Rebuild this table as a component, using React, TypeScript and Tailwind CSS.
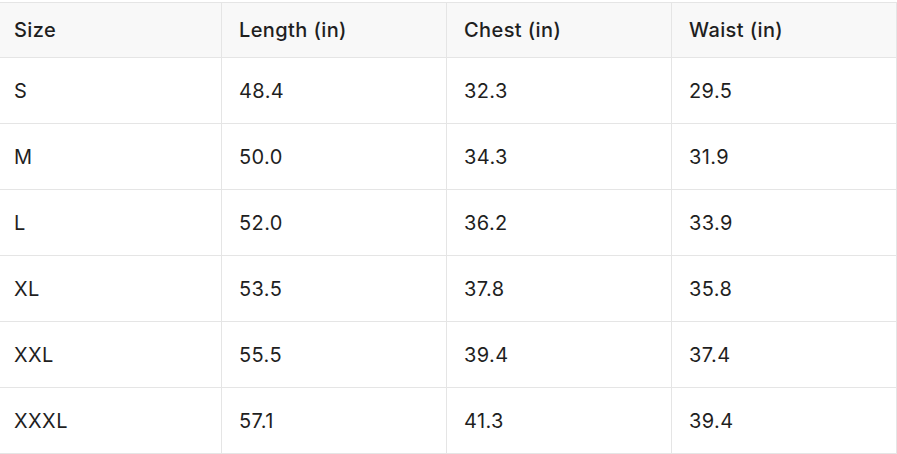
const headers = ["Size", "Length (in)", "Chest (in)", "Waist (in)"];

const rows = [
  ["S", "48.4", "32.3", "29.5"],
  ["M", "50.0", "34.3", "31.9"],
  ["L", "52.0", "36.2", "33.9"],
  ["XL", "53.5", "37.8", "35.8"],
  ["XXL", "55.5", "39.4", "37.4"],
  ["XXXL", "57.1", "41.3", "39.4"],
];

const cols = "grid grid-cols-[222px_225px_225px_225px]";

export default function App() {
  return (
    <div
      className="w-[897px] h-[454px] bg-white pt-[2px] text-[20px] tracking-[0.02em] text-[#1f1f1f] overflow-hidden"
      style={{ fontFamily: "Inter, 'Noto Sans', sans-serif" }}
    >
      <div className="border-t border-[#e5e5e5]">
        {/* header */}
        <div className={`${cols} h-[55px] bg-[#f8f8f8] border-b border-[#e5e5e5] font-medium`}>
          {headers.map((h, i) => (
            <div
              key={h}
              className={`flex items-center border-r border-[#e5e5e5] ${i === 0 ? "pl-[14px]" : "pl-[17px]"}`}
            >
              {h}
            </div>
          ))}
        </div>

        {/* body */}
        {rows.map((r) => (
          <div key={r[0]} className={`${cols} h-[66px] border-b border-[#e5e5e5]`}>
            {r.map((v, i) => (
              <div
                key={i}
                className={`flex items-center border-r border-[#e5e5e5] ${i === 0 ? "pl-[14px]" : "pl-[17px]"}`}
              >
                {v}
              </div>
            ))}
          </div>
        ))}
      </div>
    </div>
  );
}
